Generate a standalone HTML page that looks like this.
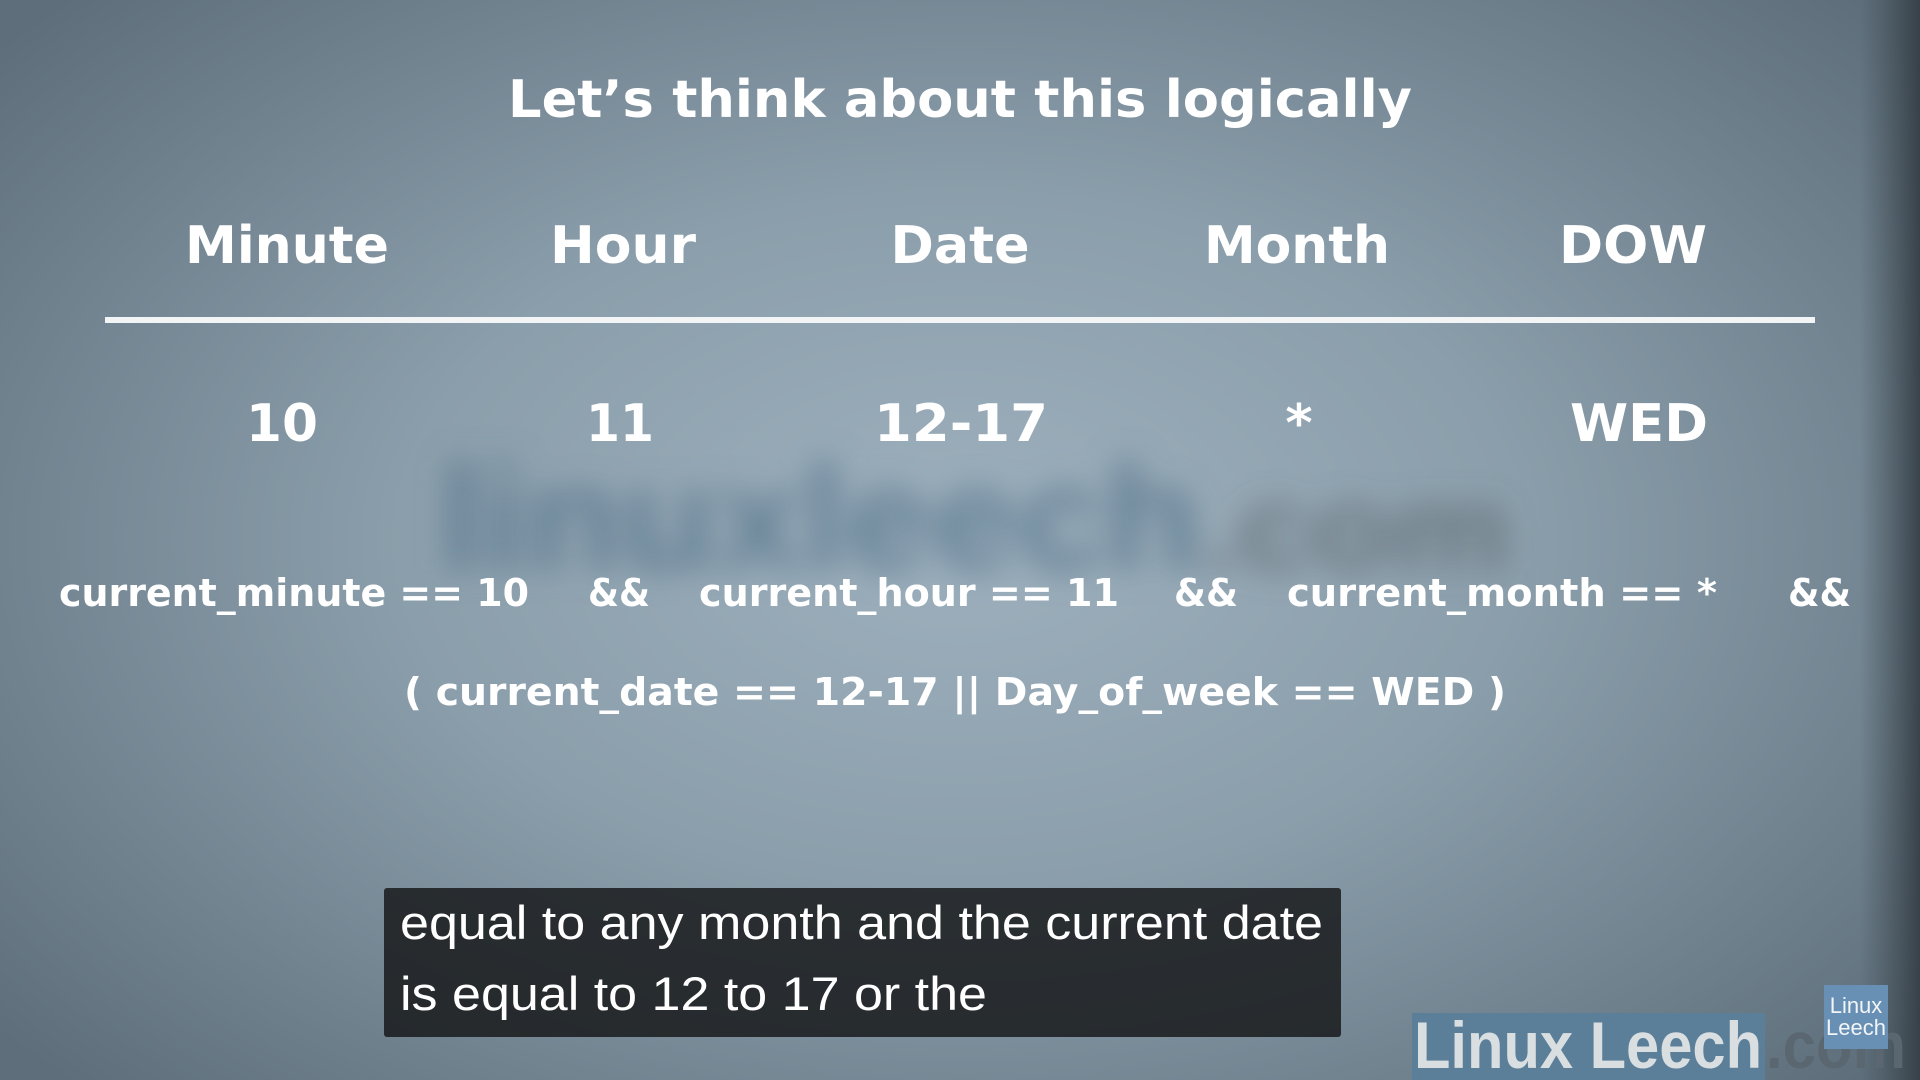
<!DOCTYPE html>
<html><head><meta charset="utf-8"><style>
html,body{margin:0;padding:0;width:1920px;height:1080px;overflow:hidden;background:#7d909d}
svg{display:block}
</style></head><body>
<svg width="1920" height="1080" viewBox="0 0 1920 1080" xmlns="http://www.w3.org/2000/svg">
<defs>
<radialGradient id="bg" cx="0.5" cy="0.5" r="0.65" gradientTransform="translate(0.5 0.5) scale(1 1.1) translate(-0.5 -0.5)">
<stop offset="0" stop-color="#9eb0bd"/>
<stop offset="0.45" stop-color="#8b9eab"/>
<stop offset="1" stop-color="#5e6f7b"/>
</radialGradient>
<linearGradient id="rs" x1="0" x2="1">
<stop offset="0" stop-color="#3c464e" stop-opacity="0"/>
<stop offset="1" stop-color="#2f383f" stop-opacity="0.85"/>
</linearGradient>
<filter id="bl" x="-20%" y="-60%" width="140%" height="220%"><feGaussianBlur stdDeviation="16"/></filter>
</defs>
<rect width="1920" height="1080" fill="url(#bg)"/>
<rect x="1860" y="0" width="60" height="1080" fill="url(#rs)"/>
<g filter="url(#bl)" font-family="Liberation Sans, sans-serif" font-weight="bold">
<text x="440" y="570" font-size="150" fill="#4f7089" textLength="760" lengthAdjust="spacingAndGlyphs" opacity="0.75">linuxleech</text>
<text x="1200" y="570" font-size="120" fill="#5a646c" textLength="310" lengthAdjust="spacingAndGlyphs" opacity="0.7">.com</text>
</g>
<g font-family="DejaVu Sans, Verdana, sans-serif" font-weight="bold" fill="#ffffff">
<text x="960" y="117" font-size="52" text-anchor="middle" textLength="904" lengthAdjust="spacingAndGlyphs">Let’s think about this logically</text>
<text x="287" y="263" font-size="52" text-anchor="middle" textLength="204" lengthAdjust="spacingAndGlyphs">Minute</text>
<text x="623" y="263" font-size="52" text-anchor="middle" textLength="146" lengthAdjust="spacingAndGlyphs">Hour</text>
<text x="960" y="263" font-size="52" text-anchor="middle" textLength="139" lengthAdjust="spacingAndGlyphs">Date</text>
<text x="1297" y="263" font-size="52" text-anchor="middle" textLength="186" lengthAdjust="spacingAndGlyphs">Month</text>
<text x="1633" y="263" font-size="52" text-anchor="middle" textLength="148" lengthAdjust="spacingAndGlyphs">DOW</text>
<rect x="105" y="317" width="1710" height="6" fill="#f2f4f5"/>
<text x="282" y="441" font-size="52" text-anchor="middle" textLength="72" lengthAdjust="spacingAndGlyphs">10</text>
<text x="620" y="441" font-size="52" text-anchor="middle" textLength="68" lengthAdjust="spacingAndGlyphs">11</text>
<text x="961" y="441" font-size="52" text-anchor="middle" textLength="174" lengthAdjust="spacingAndGlyphs">12-17</text>
<text x="1299" y="441" font-size="52" text-anchor="middle">*</text>
<text x="1639" y="441" font-size="52" text-anchor="middle" textLength="138" lengthAdjust="spacingAndGlyphs">WED</text>
<g font-size="38">
<text x="59" y="606" textLength="470" lengthAdjust="spacingAndGlyphs">current_minute == 10</text>
<text x="588" y="606" textLength="62" lengthAdjust="spacingAndGlyphs">&amp;&amp;</text>
<text x="699" y="606" textLength="420" lengthAdjust="spacingAndGlyphs">current_hour == 11</text>
<text x="1174" y="606" textLength="64" lengthAdjust="spacingAndGlyphs">&amp;&amp;</text>
<text x="1287" y="606" textLength="430" lengthAdjust="spacingAndGlyphs">current_month == *</text>
<text x="1788" y="606" textLength="63" lengthAdjust="spacingAndGlyphs">&amp;&amp;</text>
<text x="404" y="705" textLength="1102" lengthAdjust="spacingAndGlyphs">( current_date == 12-17 ||  Day_of_week == WED )</text>
</g>
</g>
<rect x="1412" y="1013" width="353" height="67" fill="#5b7f99"/>
<text x="1414" y="1068" font-family="Liberation Sans, sans-serif" font-weight="bold" font-size="66" fill="#d9dee1" textLength="348" lengthAdjust="spacingAndGlyphs">Linux Leech</text>
<text x="1766" y="1068" font-family="Liberation Sans, sans-serif" font-weight="bold" font-size="66" fill="#5b6770" textLength="140" lengthAdjust="spacingAndGlyphs">.com</text>
<rect x="1824" y="985" width="64" height="64" fill="#6890b4"/>
<text x="1856" y="1013" font-family="Liberation Sans, sans-serif" font-size="22" fill="#f2f5f8" text-anchor="middle">Linux</text>
<text x="1856" y="1035" font-family="Liberation Sans, sans-serif" font-size="22" fill="#f2f5f8" text-anchor="middle">Leech</text>
<rect x="384" y="888" width="957" height="149" rx="3" fill="#151617" fill-opacity="0.82"/>
<g font-family="Liberation Sans, Arial, sans-serif" font-size="47" fill="#ffffff">
<text x="400" y="939" textLength="923" lengthAdjust="spacingAndGlyphs">equal to any month and the current date</text>
<text x="400" y="1010" textLength="587" lengthAdjust="spacingAndGlyphs">is equal to 12 to 17 or the</text>
</g>
</svg>
</body></html>
